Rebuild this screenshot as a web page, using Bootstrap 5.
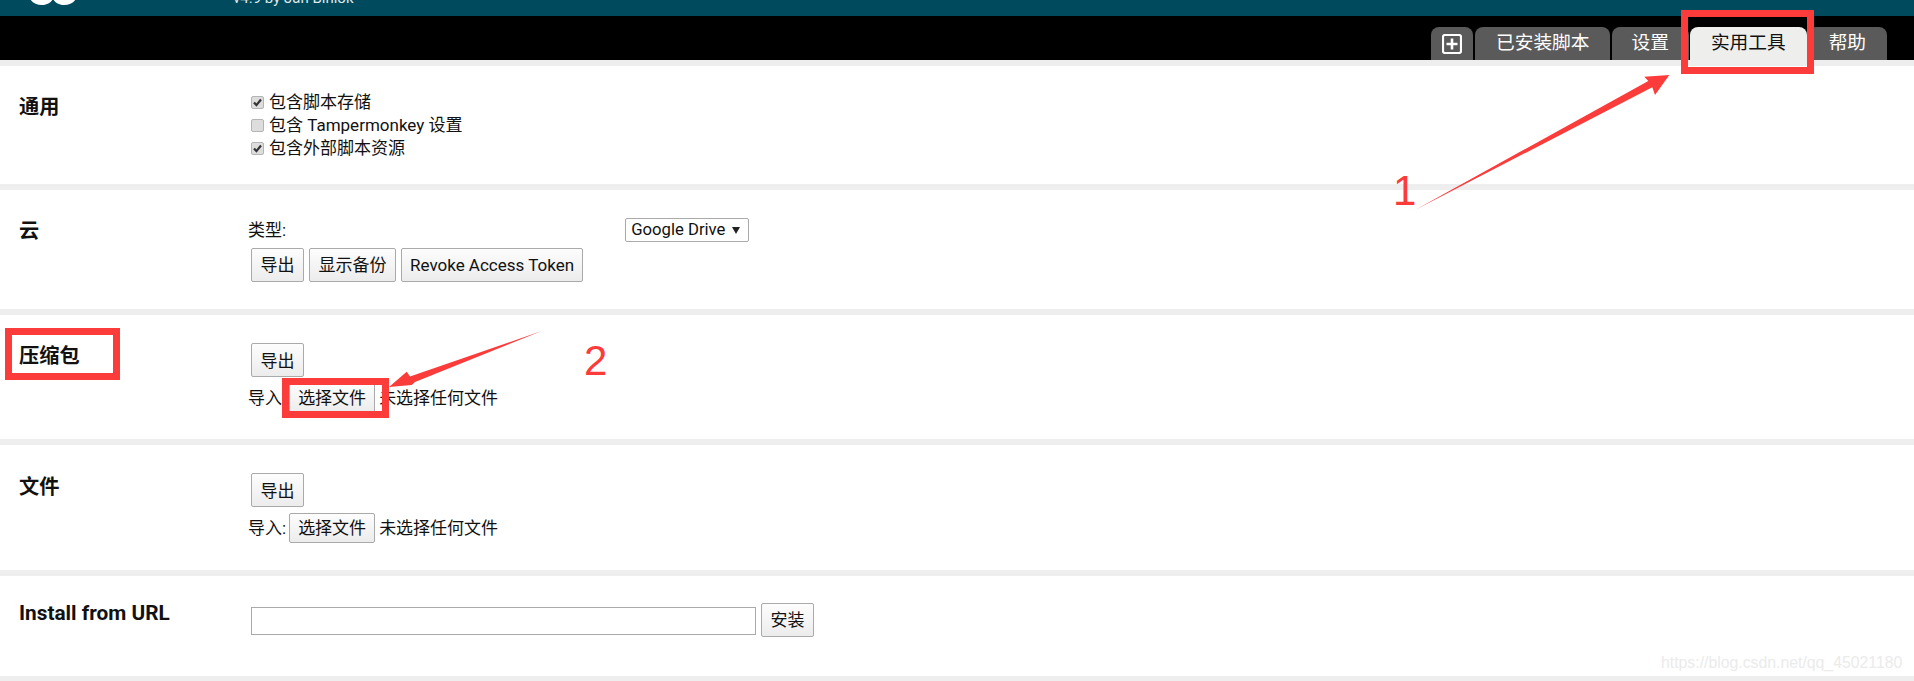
<!DOCTYPE html>
<html lang="zh">
<head>
<meta charset="utf-8">
<title>Tampermonkey</title>
<link href="https://cdn.jsdelivr.net/npm/bootstrap@5.3.0/dist/css/bootstrap.min.css" rel="stylesheet">
<style>
html,body{height:681px;overflow:hidden;}
body{position:relative;background:#eee;font-family:Roboto,"Noto Sans CJK SC",sans-serif;font-size:17px;line-height:23px;color:#111;}
.tm-top{height:16px;background:#004a5e;overflow:hidden;}
.tm-logo{margin-left:28px;margin-top:-15px;width:50px;height:20px;flex:none;}
.tm-ver{margin-left:155px;margin-top:-13px;color:#dfe8ea;font-size:15px;line-height:23px;white-space:nowrap;}
.tm-bar{height:44px;background:#000;padding-right:27px;}
.tm-tab{height:33px;margin-left:2px;padding:0 21px;background:#5a5a5a;color:#fff;font-size:18.7px;line-height:32px;border-radius:8px 8px 0 0;white-space:nowrap;}
.tm-tab.tm-on{background:#eeeeec;color:#111;margin-left:1px;margin-right:-1px;}
.tm-tab.tm-plus{padding:7px 11px 0 11px;}
.tm-tab.tm-wide{padding:0 20px 0 21px;}
.tm-tab.tm-set{padding:0 20px;}
.tm-sec{background:#fff;margin-top:6px;}
.tm-s1{height:118px;padding-top:24.5px;}
.tm-s2{height:119px;padding-top:28px;}
.tm-s3{height:124px;padding-top:28px;}
.tm-s4{height:125px;padding-top:28px;}
.tm-s5{height:100px;padding-top:27px;}
.tm-name{width:248px;flex:none;padding-left:19px;font-size:20.2px;font-weight:700;line-height:26px;}
.tm-s1 .tm-name{padding-top:3px;}
.tm-s4 .tm-name{padding-top:1px;}
.tm-s5 .tm-name{margin-top:-3px;font-size:20.8px;}
.tm-check{height:23px;padding-left:3px;}
.tm-box.form-check-input{width:13px;height:13px;margin:0 5px 0 0;flex:none;background-color:#ddd;border:1px solid #b4b4b4;border-radius:2px;box-shadow:none;}
.tm-box.form-check-input:checked{background-color:#ddd;border-color:#b4b4b4;background-image:url("data:image/svg+xml,%3Csvg xmlns='http://www.w3.org/2000/svg' viewBox='0 0 13 13'%3E%3Cpath d='M3 6.5l2.4 2.6L10 3.5' fill='none' stroke='%23333' stroke-width='2.2'/%3E%3C/svg%3E");background-size:13px 13px;}
.tm-btn.btn{height:34px;padding:0 8.5px;margin-left:3px;font-size:17px;line-height:32px;color:#111;background:linear-gradient(#fdfdfd,#ececec);border:1px solid #aaa;border-radius:2px;white-space:nowrap;}
.tm-btn.tm-next{margin-left:5px;}
.tm-btn.tm-exp{line-height:34px;}
.tm-btn.tm-long{padding:0 8px;}
.tm-file.btn{height:30px;padding:0 8px;margin:0 4px 0 3px;line-height:28px;}
.tm-imp{margin-top:6px;}
.tm-gap{margin-top:6px;}
.tm-pick.form-select{width:124px;height:24px;margin-left:339px;padding:0 5px;font-size:16.7px;line-height:22px;color:#111;border:1px solid #aaa;border-radius:2px;box-shadow:none;background-image:url("data:image/svg+xml,%3Csvg xmlns='http://www.w3.org/2000/svg' viewBox='0 0 8 8'%3E%3Cpath d='M0 1h8L4 8z' fill='%23222'/%3E%3C/svg%3E");background-size:8px 8px;background-position:right 8px center;background-repeat:no-repeat;}
.tm-url.form-control{width:505px;height:28px;margin:2px 0 0 3px;padding:0 4px;border:1px solid #aaa;border-radius:0;box-shadow:none;}
.tm-urlrow{height:34px;}
.tm-overlay{position:absolute;left:0;top:0;width:1914px;height:681px;pointer-events:none;}
.tm-num{position:absolute;color:#fc3b3b;font-family:"Liberation Sans",sans-serif;font-size:42px;line-height:42px;}
.tm-n1{left:1393px;top:170px;}
.tm-n2{left:584px;top:340px;}
.tm-mark{position:absolute;left:1661px;top:653px;color:#ebebeb;font-family:"Liberation Sans",sans-serif;font-size:15.8px;line-height:20px;white-space:nowrap;}
</style>
</head>
<body>
<div class="tm-top d-flex align-items-start">
  <svg class="tm-logo" viewBox="0 0 50 20" aria-hidden="true"><path d="M0 6C0 15 6 20 14 20c6 0 9-3 11-6 2 3 5 6 11 6 8 0 14-5 14-14z" fill="#fff"/></svg>
  <div class="tm-ver">v4.9 by Jan Biniok</div>
</div>
<div class="tm-bar d-flex justify-content-end align-items-end">
  <div class="tm-tab tm-plus"><svg width="20" height="20" viewBox="0 0 20 20" class="d-block" aria-hidden="true"><rect x="1" y="1" width="18" height="18" rx="2" fill="none" stroke="#fff" stroke-width="2.2"/><path d="M10 4.5v11M4.5 10h11" stroke="#fff" stroke-width="2.6"/></svg></div>
  <div class="tm-tab tm-wide">已安装脚本</div>
  <div class="tm-tab tm-set">设置</div>
  <div class="tm-tab tm-on">实用工具</div>
  <div class="tm-tab">帮助</div>
</div>

<section class="tm-sec tm-s1 d-flex">
  <div class="tm-name">通用</div>
  <div>
    <div class="tm-check d-flex align-items-center"><input class="form-check-input tm-box" type="checkbox" checked><span>包含脚本存储</span></div>
    <div class="tm-check d-flex align-items-center"><input class="form-check-input tm-box" type="checkbox"><span>包含 Tampermonkey 设置</span></div>
    <div class="tm-check d-flex align-items-center"><input class="form-check-input tm-box" type="checkbox" checked><span>包含外部脚本资源</span></div>
  </div>
</section>

<section class="tm-sec tm-s2 d-flex">
  <div class="tm-name">云</div>
  <div>
    <div class="d-flex align-items-center"><span>类型:</span><select class="form-select tm-pick"><option>Google Drive</option></select></div>
    <div class="d-flex tm-gap">
      <button class="btn tm-btn" type="button">导出</button>
      <button class="btn tm-btn tm-next" type="button">显示备份</button>
      <button class="btn tm-btn tm-next tm-long" type="button">Revoke Access Token</button>
    </div>
  </div>
</section>

<section class="tm-sec tm-s3 d-flex">
  <div class="tm-name">压缩包</div>
  <div>
    <button class="btn tm-btn tm-exp d-block" type="button">导出</button>
    <div class="d-flex align-items-center tm-imp"><span>导入:</span><button class="btn tm-btn tm-file" type="button">选择文件</button><span>未选择任何文件</span></div>
  </div>
</section>

<section class="tm-sec tm-s4 d-flex">
  <div class="tm-name">文件</div>
  <div>
    <button class="btn tm-btn tm-exp d-block" type="button">导出</button>
    <div class="d-flex align-items-center tm-imp"><span>导入:</span><button class="btn tm-btn tm-file" type="button">选择文件</button><span>未选择任何文件</span></div>
  </div>
</section>

<section class="tm-sec tm-s5 d-flex">
  <div class="tm-name">Install from URL</div>
  <div class="d-flex align-items-center align-self-start tm-urlrow">
    <input class="form-control tm-url" type="text">
    <button class="btn tm-btn tm-next" type="button">安装</button>
  </div>
</section>

<div class="tm-mark">https://blog.csdn.net/qq_45021180</div>
<svg class="tm-overlay" viewBox="0 0 1914 681" aria-hidden="true">
  <g fill="none" stroke="#fc3b3b" stroke-width="7">
    <rect x="1684.5" y="13.5" width="126" height="57"/>
    <rect x="8.5" y="331.5" width="108" height="45"/>
    <rect x="285.5" y="381.5" width="100" height="33"/>
  </g>
  <g fill="#fc3b3b">
    <path d="M1415 210L1648.3 81L1644.3 76.7L1669.3 75L1655 95L1652.3 87.3z"/>
    <path d="M541.7 331L410 376.5L406.7 371.7L389 387L411.7 385L415 382z"/>
  </g>
</svg>
<div class="tm-num tm-n1">1</div>
<div class="tm-num tm-n2">2</div>
</body>
</html>
